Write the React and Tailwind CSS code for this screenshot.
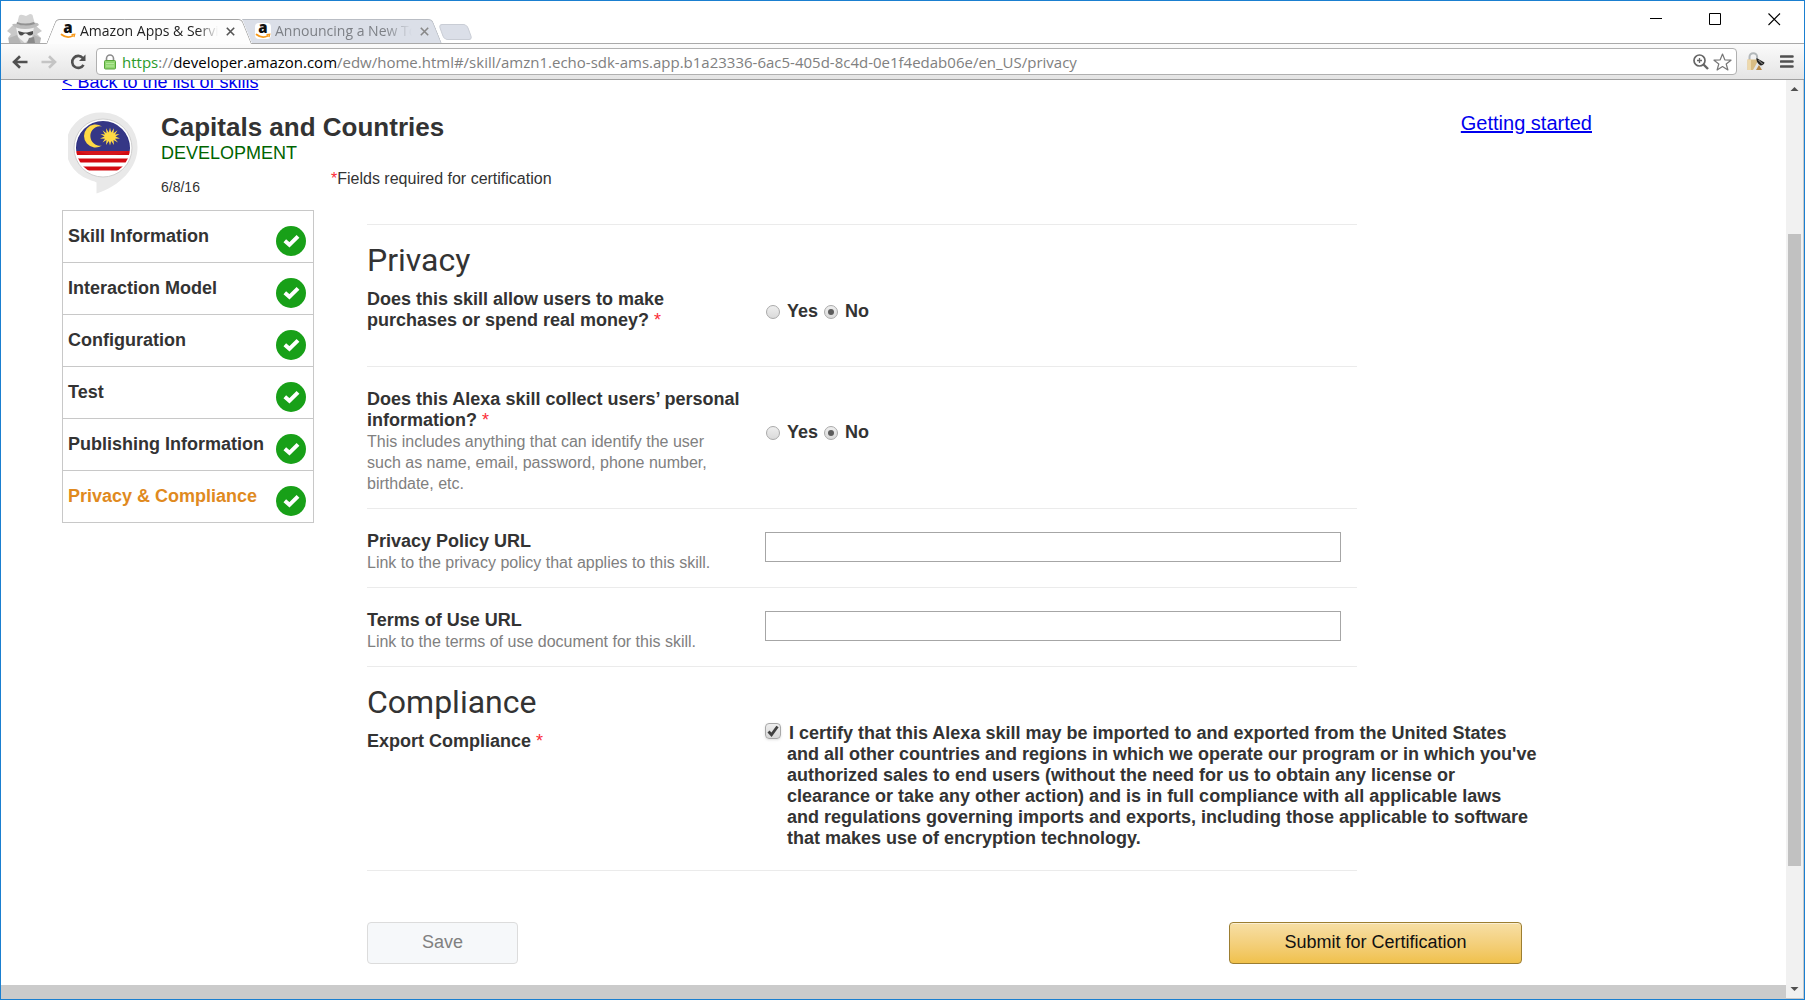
import { useState } from "react";

const steps = [
  "Skill Information",
  "Interaction Model",
  "Configuration",
  "Test",
  "Publishing Information",
  "Privacy & Compliance",
];

function IncognitoIcon() {
  return (
    <svg width="36" height="29" viewBox="0 0 36 29" className="shrink-0" aria-hidden="true">
      <path d="M2 29 L1 24 L4 20 L0 17 L5 12 L29 12 L35 17 L30 20 L34 24 L31 29 Z" fill="#c9c9c9" />
      <path d="M9 13 L27 13 L25 23 L18 29 L11 23 Z" fill="#f1f1f1" />
      <path d="M10 10 L12 2 Q13 0 16 1 L19 2 L23 0 Q26 0 26 3 L28 10 Z" fill="#d4d4d4" />
      <path d="M5 11 Q6 9 10 10 Q18 13 27 9 Q31 8 32 11 Q27 15 18 15 Q9 15 5 11 Z" fill="#bdbdbd" />
      <path d="M10 8 Q18 11 27 8 L28 10 Q18 13 9.500 10 Z" fill="#929292" />
      <path d="M11 17 L17 18.500 L20 18.500 L26 17 L26 20 Q23 23 20 20 L19 19.500 L18 19.500 L17 20 Q14 23 12 20 Z" fill="#4b4b4b" />
      <path d="M2 24 L10 21 L14 29 L2 29 Z M34 24 L27 21 L22 29 L33 29 Z" fill="#b5b5b5" />
      <path d="M22 24 L27 23 L28 29 L20 29 Z" fill="#8a8a8a" />
    </svg>
  );
}

function AmazonIcon() {
  return (
    <svg width="16" height="16" viewBox="0 0 16 16" className="shrink-0 overflow-visible rounded-sm bg-white" aria-hidden="true">
      <text x="8" y="10" textAnchor="middle" fontFamily="Open Sans, sans-serif" fontSize="15" fontWeight="800" fill="#111">
        a
      </text>
      <path d="M1.500 11.500 Q7 16 13 12.800" fill="none" stroke="#f79a1c" strokeWidth="1.700" strokeLinecap="round" />
      <path d="M11.500 11.600 L14.800 11.200 L14 14.200" fill="none" stroke="#f79a1c" strokeWidth="1.200" />
    </svg>
  );
}

function CloseIcon({ color }) {
  return (
    <svg width="9" height="9" viewBox="0 0 9 9" aria-hidden="true">
      <path d="M0.800 0.800 L8.200 8.200 M8.200 0.800 L0.800 8.200" stroke={color} strokeWidth="1.600" />
    </svg>
  );
}

function Tab({ title, active }) {
  return (
    <div
      className={
        active
          ? "relative z-10 h-[25px] w-[196px] before:absolute before:inset-y-0 before:left-0 before:w-3/5 before:origin-center before:-skew-x-[22deg] before:rounded-tl before:border-l before:border-t before:border-[#a5a5a5] before:bg-[#fdfdfd] after:absolute after:inset-y-0 after:right-0 after:w-3/5 after:skew-x-[22deg] after:rounded-tr after:border-r after:border-t after:border-[#a5a5a5] after:bg-[#fdfdfd]"
          : "relative h-6 w-[190px] before:absolute before:inset-y-0 before:left-0 before:w-3/5 before:skew-x-[22deg] before:border-t before:border-[#b9bdc4] before:bg-[#dbdfe8] after:absolute after:inset-y-0 after:right-0 after:w-3/5 after:skew-x-[22deg] after:rounded-tr after:border-r after:border-t after:border-[#b9bdc4] after:bg-[#dbdfe8]"
      }
    >
      <div className={active ? "relative z-10 flex h-6 items-center pl-[9px] pr-3" : "relative z-10 flex h-6 items-center px-2"}>
        <AmazonIcon />
        <span
          className={
            active
              ? "ml-1 min-w-0 flex-1 overflow-hidden whitespace-nowrap text-sm leading-5 text-[#222] [mask-image:linear-gradient(to_right,black_85%,transparent)]"
              : "ml-1 min-w-0 flex-1 overflow-hidden whitespace-nowrap text-sm leading-5 text-[#7d8086] [mask-image:linear-gradient(to_right,black_80%,transparent)]"
          }
        >
          {title}
        </span>
        <button type="button" aria-label={"Close " + title} className="ml-2">
          <CloseIcon color={active ? "#555" : "#888"} />
        </button>
      </div>
    </div>
  );
}

function TabStrip() {
  return (
    <div className="flex h-[43px] items-end border-b border-[#a9a9a9] bg-white pl-1.5">
      <IncognitoIcon />
      <div className="-mb-px ml-2 flex items-end">
        <Tab title="Amazon Apps & Services Developer" active />
        <div className="pb-px">
          <Tab title="Announcing a New Tool" />
        </div>
      </div>
      <button type="button" aria-label="New tab" className="mb-[3px] ml-1 h-4 w-[29px] skew-x-[20deg] rounded border border-[#c9cdd5] bg-[#dbdfe8]" />
      <div className="ml-auto flex gap-[46px] self-start pr-[23px] pt-3">
        <button type="button" aria-label="Minimize">
          <svg width="13" height="13" viewBox="0 0 13 13"><path d="M0 5.500H12" stroke="#000" /></svg>
        </button>
        <button type="button" aria-label="Maximize">
          <svg width="13" height="13" viewBox="0 0 13 13"><path d="M0.500 0.500H11.500V11.500H0.500Z" fill="none" stroke="#000" /></svg>
        </button>
        <button type="button" aria-label="Close window">
          <svg width="13" height="13" viewBox="0 0 13 13"><path d="M0.500 0.500L12 12M12 0.500L0.500 12" stroke="#000" strokeWidth="1.100" /></svg>
        </button>
      </div>
    </div>
  );
}

function Toolbar() {
  return (
    <div className="flex h-9 items-center border-b border-[#a0a0a0] bg-linear-to-b from-[#fbfbfb] to-[#e4e4e4] pl-[11px] pr-[10px]">
      <button type="button" aria-label="Back">
        <svg width="16" height="14" viewBox="0 0 16 14"><path d="M15.500 7H3M8 1.200L2 7L8 12.800" fill="none" stroke="#505050" strokeWidth="2.600" /></svg>
      </button>
      <button type="button" aria-label="Forward" className="ml-[13px]">
        <svg width="16" height="14" viewBox="0 0 16 14"><path d="M0.500 7H13M8 1.200L14 7L8 12.800" fill="none" stroke="#c4c4c4" strokeWidth="2.600" /></svg>
      </button>
      <button type="button" aria-label="Reload" className="ml-[13px]">
        <svg width="17" height="16" viewBox="0 0 17 16">
          <path d="M13.500 10.800A6 6 0 1 1 12.800 4" fill="none" stroke="#505050" strokeWidth="2.600" />
          <path d="M15.500 0.500V7H9Z" fill="#505050" />
        </svg>
      </button>
      <div className="ml-[9px] flex h-[27px] min-w-0 flex-1 items-center rounded-sm border border-[#b0b0b0] bg-white pl-[7px] pr-1">
        <svg width="12" height="16" viewBox="0 0 12 16" className="shrink-0" aria-hidden="true">
          <path d="M2.500 8V4.500a3.500 3.500 0 0 1 7 0V8" fill="none" stroke="#8c8c8c" strokeWidth="1.600" />
          <rect x="0.500" y="6.500" width="11" height="8.500" rx="1" fill="#8fd66f" stroke="#57a53a" />
          <path d="M2 9.500h8M2 12h8" stroke="#b5e89c" />
        </svg>
        <p className="ml-1.5 min-w-0 flex-1 overflow-hidden whitespace-nowrap text-[15px] leading-5 text-[#808080]">
          <span className="text-[#2a9a2a]">https</span>://<span className="text-black">developer.amazon.com</span>
          /edw/home.html#/skill/amzn1.echo-sdk-ams.app.b1a23336-6ac5-405d-8c4d-0e1f4edab06e/en_US/privacy
        </p>
        <button type="button" aria-label="Zoom">
          <svg width="16" height="16" viewBox="0 0 16 16">
            <circle cx="6.500" cy="6.500" r="5.500" fill="none" stroke="#666" strokeWidth="1.700" />
            <path d="M10.500 10.500L15 15" stroke="#666" strokeWidth="2.400" />
            <path d="M4 6.500H9M6.500 4V9" stroke="#666" strokeWidth="1.300" />
          </svg>
        </button>
        <button type="button" aria-label="Bookmark" className="ml-1">
          <svg width="19" height="18" viewBox="0 0 19 18">
            <path d="M9.500 1L11.800 6.800L18 7.200L13.200 11L14.900 17L9.500 13.600L4.100 17L5.800 11L1 7.200L7.200 6.800Z" fill="none" stroke="#777" strokeWidth="1.200" strokeLinejoin="round" />
          </svg>
        </button>
      </div>
      <button type="button" aria-label="Extension" className="ml-2.5">
        <svg width="18" height="19" viewBox="0 0 18 19">
          <path d="M2.500 8V5a3.800 3.800 0 0 1 7.600 0V8" fill="none" stroke="#b3b8ba" strokeWidth="2" />
          <path d="M0.500 7.500H11V18H0.500Z" fill="#d9bd84" />
          <path d="M0.500 7.500H4V18H0.500Z" fill="#eed9ac" />
          <path d="M6 18L11 9L16 14L15 18Z" fill="#e6e6e6" />
          <path d="M9.500 6L17.500 10.500Q17 13 13.500 13.500Q9 11 9.500 6Z" fill="#222" />
          <path d="M12 13L15 18H9Z" fill="#b98b4a" />
          <path d="M11.500 8L15.500 12" stroke="#aaa" />
        </svg>
      </button>
      <button type="button" aria-label="Menu" className="ml-[15px]">
        <svg width="14" height="13" viewBox="0 0 14 13"><path d="M1 1.500H12.500M1 6.500H12.500M1 11.500H12.500" stroke="#505050" strokeWidth="2.600" strokeLinecap="round" /></svg>
      </button>
    </div>
  );
}

function SkillIcon() {
  return (
    <svg width="70" height="82" viewBox="0 0 70 82" className="shrink-0" aria-hidden="true">
      <defs>
        <clipPath id="flag"><circle cx="35" cy="36" r="27" /></clipPath>
      </defs>
      <path d="M35 0.500A34.500 34.500 0 0 1 69.500 35.500C69.500 56 52 74 28.500 81.500V70.500C26 69 24 69 21 67.500A34.500 34.500 0 0 1 35 0.500Z" fill="#e9e9e9" />
      <circle cx="35" cy="36" r="29" fill="#fff" stroke="#cfcfcf" />
      <g clipPath="url(#flag)">
        <path d="M0 0H70V39H0Z" fill="#2b2d80" />
        <path d="M0 39H70V43H0ZM0 46.500H70V50.500H0ZM0 54.500H70V58.500H0Z" fill="#d30a11" />
      </g>
      <path d="M34 14.500A11.500 11.500 0 1 0 34 33.500A9.700 9.700 0 1 1 34 14.500Z" fill="#ffd93b" />
      <path
        d="M42 15.500L43.200 20.500L46 16.300L45.500 21.300L49.500 18.300L47 22.600L51.500 22L47.500 24.500L52 26.500L47 26.700L50 30.500L45.500 28.100L46 33L43.200 28.900L42 33.500L40.800 28.900L38 33L38.500 28.100L34.500 30.500L37 26.700L32 26.500L36.500 24.500L32.500 22L37 22.600L34.500 18.300L38.500 21.300L38 16.300L40.800 20.500Z"
        fill="#ffd93b"
      />
      <path d="M8.500 39Q35 49 61.500 39Q60 11 35 9Q10 11 8.500 39Z" fill="#fff" opacity="0.050" />
    </svg>
  );
}

function StepNav() {
  return (
    <nav className="w-[252px] shrink-0 self-start border-x border-t border-[#c8c8c8]">
      {steps.map((step) => (
        <a
          key={step}
          href="#"
          className={
            step === "Privacy & Compliance"
              ? "flex h-[52px] items-start justify-between border-b border-[#c8c8c8] pl-[5px] pr-[7px] pt-[15px] font-bold text-[#e08a1e]"
              : "flex h-[52px] items-start justify-between border-b border-[#c8c8c8] pl-[5px] pr-[7px] pt-[15px] font-bold text-[#333]"
          }
        >
          <span className="whitespace-nowrap">{step}</span>
          <svg width="30" height="30" viewBox="0 0 30 30" className="shrink-0" aria-hidden="true">
            <circle cx="15" cy="15" r="15" fill="#18a018" />
            <path d="M8.800 14.800L13.400 18.800L22 10.300" fill="none" stroke="#fff" strokeWidth="4" />
          </svg>
        </a>
      ))}
    </nav>
  );
}

function Required() {
  return <span className="font-normal text-red-500">*</span>;
}

function Rule() {
  return <hr className="max-w-[990px] border-t border-[#ebebeb]" />;
}

function YesNo({ name, label }) {
  const [value, setValue] = useState("No");
  return (
    <div role="radiogroup" aria-label={label} className="flex items-center gap-[5px] font-bold">
      {["Yes", "No"].map((option) => (
        <label key={option} className="flex items-center gap-[7px]">
          <input
            type="radio"
            name={name}
            checked={value === option}
            onChange={() => setValue(option)}
            className="ml-px grid size-3.5 appearance-none place-content-center rounded-full border border-[#aaa] bg-linear-to-b from-[#eee] to-[#dadada] before:size-1.5 before:rounded-full checked:before:bg-[#5c5c5c]"
          />
          {option}
        </label>
      ))}
    </div>
  );
}

function UrlField({ id, label, hint }) {
  return (
    <div className="flex pb-3.5 pt-[22px]">
      <div className="w-[398px] shrink-0">
        <label htmlFor={id} className="block font-bold">{label}</label>
        <p className="text-base leading-[21px] text-[#808080]">{hint}</p>
      </div>
      <input id={id} type="text" className="mt-px h-[30px] w-full max-w-[576px] border border-[#a6a6a6] bg-white px-2" />
    </div>
  );
}

function PrivacyForm() {
  const [certified, setCertified] = useState(true);
  return (
    <form className="ml-[53px] mt-3.5 w-full max-w-[1170px]" onSubmit={(e) => e.preventDefault()}>
      <Rule />
      <h2 className="pt-[15px] font-[Roboto,sans-serif] text-[32px] leading-10">Privacy</h2>
      <div className="flex pb-[35px] pt-[9px]">
        <p className="w-[398px] shrink-0 pr-[60px] font-bold">
          Does this skill allow users to make purchases or spend real money? <Required />
        </p>
        <div className="pt-3">
          <YesNo name="purchases" label="Does this skill allow users to make purchases or spend real money?" />
        </div>
      </div>
      <Rule />
      <div className="flex pb-3.5 pt-[22px]">
        <div className="w-[398px] shrink-0">
          <p className="font-bold">
            Does this Alexa skill collect users’ personal information? <Required />
          </p>
          <p className="pr-10 text-base leading-[21px] text-[#808080]">
            This includes anything that can identify the user such as name, email, password, phone number, birthdate, etc.
          </p>
        </div>
        <div className="pt-[33px]">
          <YesNo name="personal" label="Does this Alexa skill collect users’ personal information?" />
        </div>
      </div>
      <Rule />
      <UrlField id="policy" label="Privacy Policy URL" hint="Link to the privacy policy that applies to this skill." />
      <Rule />
      <UrlField id="terms" label="Terms of Use URL" hint="Link to the terms of use document for this skill." />
      <Rule />
      <h2 className="pt-[15px] font-[Roboto,sans-serif] text-[32px] leading-10">Compliance</h2>
      <div className="flex pb-[21px] pt-[9px]">
        <p className="w-[398px] shrink-0 font-bold">
          Export Compliance <Required />
        </p>
        <label className="-mt-2 flex font-bold">
          <span className="grid shrink-0 self-start">
            <input
              type="checkbox"
              checked={certified}
              onChange={(e) => setCertified(e.target.checked)}
              className="peer size-4 appearance-none rounded-sm border border-[#a8a8a8] bg-linear-to-b from-[#eee] to-[#d8d8d8] shadow-sm [grid-area:1/1]"
            />
            <svg width="16" height="16" viewBox="0 0 16 16" className="pointer-events-none hidden peer-checked:block [grid-area:1/1]" aria-hidden="true">
              <path d="M3.500 8.500L6.500 11.800L12.500 3.500" fill="none" stroke="#404040" strokeWidth="2.800" />
            </svg>
          </span>
          <span className="ml-1.5 max-w-[756px] indent-0.5">
            I certify that this Alexa skill may be imported to and exported from the United States and all other countries and
            regions in which we operate our program or in which you've authorized sales to end users (without the need for us to
            obtain any license or clearance or take any other action) and is in full compliance with all applicable laws and
            regulations governing imports and exports, including those applicable to software that makes use of encryption
            technology.
          </span>
        </label>
      </div>
      <Rule />
      <div className="mb-5 mt-[51px] flex max-w-[1155px] justify-between">
        <button type="button" className="h-[42px] w-[151px] rounded border border-[#dcdcdc] bg-[#f6f8fa] pb-0.5 text-[#808080]">
          Save
        </button>
        <button
          type="submit"
          className="h-[42px] w-[293px] rounded border border-[#9c7e31] bg-linear-to-b from-[#f7dfa5] to-[#f0c14b] pb-0.5 text-[#111] shadow-[inset_0_1px_0_rgba(255,255,255,0.5)]"
        >
          Submit for Certification
        </button>
      </div>
    </form>
  );
}

function ScrollBar() {
  return (
    <div className="flex w-[18px] shrink-0 flex-col items-center border-b border-r border-[#c8c8c8] bg-[#f1f1f1]" aria-hidden="true">
      <svg width="17" height="17" viewBox="0 0 17 17"><path d="M4.500 11L8.500 7L12.500 11Z" fill="#505050" /></svg>
      <div className="flex-[137]" />
      <div className="w-[13px] flex-[632] bg-[#c1c1c1]" />
      <div className="flex-[115]" />
      <svg width="17" height="17" viewBox="0 0 17 17"><path d="M4.500 6L8.500 10L12.500 6Z" fill="#505050" /></svg>
    </div>
  );
}

export default function App() {
  return (
    <div className="flex min-h-screen flex-col border border-[#1a7fd0] bg-white font-['Open_Sans',sans-serif]">
      <TabStrip />
      <Toolbar />
      <div className="flex flex-1 font-['Liberation_Sans',Arial,sans-serif] text-lg leading-[21px] text-[#333]">
        <main className="flex min-w-0 flex-1 flex-col overflow-hidden">
          <div className="flex-1 pl-[61px]">
            <a href="#" className="-mt-2.5 block w-fit leading-6 text-[#0000ee] underline">{"< Back to the list of skills"}</a>
            <header className="mt-[17px] flex max-w-[1530px] items-start">
              <div className="w-[99px] shrink-0 pl-1.5 pt-px">
                <SkillIcon />
              </div>
              <div>
                <h1 className="text-[26px] font-bold leading-8">Capitals and Countries</h1>
                <p className="leading-5 text-[#006400]">DEVELOPMENT</p>
                <div className="mt-1.5 flex">
                  <p className="w-[170px] pt-2 text-sm leading-5">6/8/16</p>
                  <p className="text-base leading-5">
                    <span className="text-red-500">*</span>Fields required for certification
                  </p>
                </div>
              </div>
              <a href="#" className="ml-auto text-xl leading-6 text-[#0000ee] underline">Getting started</a>
            </header>
            <div className="mt-[13px] flex">
              <StepNav />
              <PrivacyForm />
            </div>
          </div>
          <div className="h-3.5 bg-[#cbcbcb]" />
        </main>
        <ScrollBar />
      </div>
    </div>
  );
}
